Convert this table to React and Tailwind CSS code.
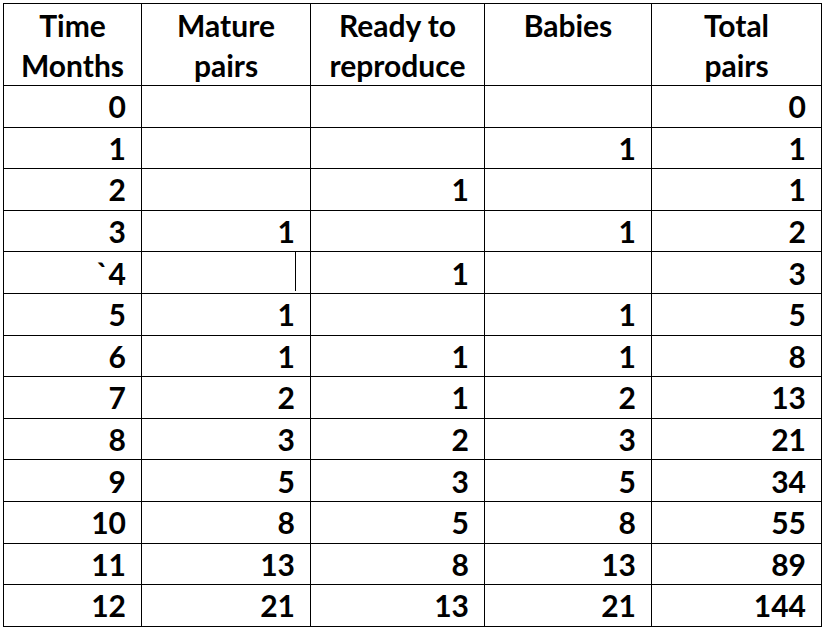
import React from "react";

const rows = [
  ["0", "", "", "", "0"],
  ["1", "", "", "1", "1"],
  ["2", "", "1", "", "1"],
  ["3", "1", "", "1", "2"],
  ["`4", "", "1", "", "3"],
  ["5", "1", "", "1", "5"],
  ["6", "1", "1", "1", "8"],
  ["7", "2", "1", "2", "13"],
  ["8", "3", "2", "3", "21"],
  ["9", "5", "3", "5", "34"],
  ["10", "8", "5", "8", "55"],
  ["11", "13", "8", "13", "89"],
  ["12", "21", "13", "21", "144"],
];

const headers = [
  ["Time", "Months"],
  ["Mature", "pairs"],
  ["Ready to", "reproduce"],
  ["Babies", ""],
  ["Total", "pairs"],
];

export default function App() {
  return (
    <div className="w-[826px] h-[631px] bg-white overflow-hidden pl-[3px] pt-[3px]">
      <div
        className="grid grid-cols-[138px_169px_174px_167px_170px] grid-rows-[82px_repeat(13,41.6px)] w-max border-t border-l border-black text-black font-bold text-[30px]"
        style={{ fontFamily: "Lato, 'Open Sans', sans-serif" }}
      >
        {headers.map((h, i) => (
          <div
            key={"h" + i}
            className="border-r border-b border-black text-center leading-[40px] pt-[1px]"
          >
            <div>{h[0]}</div>
            <div>{h[1] || "\u00a0"}</div>
          </div>
        ))}
        {rows.map((r, ri) =>
          r.map((c, ci) => (
            <div
              key={ri + "-" + ci}
              className="relative border-r border-b border-black flex items-center justify-end pr-[15px] leading-[36px]"
            >
              {c}
              {ri === 4 && ci === 1 && (
                <div className="absolute left-[153px] top-0 bottom-[2px] w-px bg-black" />
              )}
            </div>
          ))
        )}
      </div>
    </div>
  );
}
